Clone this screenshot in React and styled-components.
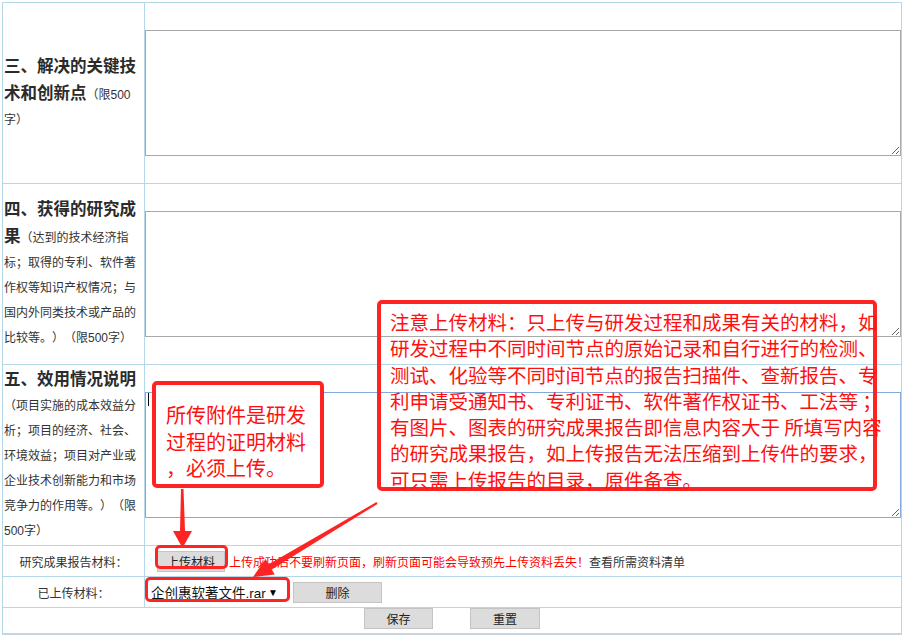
import React from "react"
import styled, { createGlobalStyle } from "styled-components"

const GlobalStyle = createGlobalStyle`
	html, body {
		margin: 0;
		padding: 0;
		background: #ffffff;
	}
	body {
		font-family: "Liberation Sans", "Noto Sans CJK SC", sans-serif;
		color: #333333;
		text-spacing-trim: space-all;
	}
`

const RED = "#ff2424"
const LINE = "#b5d8e8"

const Page = styled.div`
	position: relative;
	width: 904px;
	height: 638px;
	overflow: hidden;
	padding: 2px 0 0 2px;
	box-sizing: border-box;
`

const Form = styled.div`
	display: grid;
	grid-template-columns: 142px 757px;
	width: 900px;
	border-top: 1px solid ${LINE};
	border-left: 1px solid ${LINE};
	box-sizing: border-box;
`

const Cell = styled.div`
	position: relative;
	display: flex;
	align-items: center;
	box-sizing: border-box;
	height: ${(p) => p.$h}px;
	border-right: 1px solid ${LINE};
	border-bottom: 1px solid ${LINE};
`

const LabelCell = styled(Cell)`
	padding: 0 6px 0 1px;
`

const Label = styled.div`
	line-height: 25px;
	font-size: 12px;
	color: #333333;
	text-spacing-trim: space-all;
`

const Title = styled.span`
	font-size: 16.5px;
	font-weight: bold;
	color: #2b2b2b;
`

const FieldCell = styled(Cell)`
	padding-left: ${(p) => p.$pad || 0}px;
`

const SmallLabelCell = styled(Cell)`
	justify-content: center;
	font-size: 12px;
	color: #333333;
`

const ActionCell = styled(Cell)`
	grid-column: 1 / -1;
	align-items: flex-start;
	justify-content: center;
	gap: 37px;
	border-bottom: 2px solid #c6d5df;
`

const TextArea = styled.textarea`
	display: block;
	width: 100%;
	height: 126px;
	margin: 0;
	box-sizing: border-box;
	border: 1px solid ${(p) => (p.$active ? "#86a9dc" : "#a9a9a9")};
	outline: none;
	font-family: inherit;
	background: #ffffff;
`

const Caret = styled.span`
	position: absolute;
	left: 3px;
	top: 28px;
	width: 1px;
	height: 13px;
	background: #000000;
`

const Button = styled.button`
	width: ${(p) => p.$w}px;
	height: 21px;
	margin: 0;
	padding: 0;
	background: #dcdcdc;
	border: 1px solid #c4c4c4;
	border-radius: 0;
	font-family: "Noto Sans CJK SC", sans-serif;
	font-size: 12px;
	color: #222222;
`

const Notice = styled.span`
	margin-left: 4px;
	font-size: 12px;
	color: #ff0000;
	white-space: nowrap;
`

const NoticeLink = styled.span`
	color: #333333;
`

const Select = styled.div`
	display: flex;
	align-items: center;
	justify-content: space-between;
	width: 140px;
	height: 19px;
	padding: 0 9px 0 4px;
	box-sizing: border-box;
	background: #ffffff;
	font-size: 13.5px;
	color: #111111;
	margin-right: 6px;
`

const SelectArrow = styled.span`
	font-size: 10px;
	color: #000000;
`

const Overlay = styled.div`
	position: absolute;
	inset: 0;
	pointer-events: none;
`

const Callout = styled.div`
	position: absolute;
	left: ${(p) => p.$x}px;
	top: ${(p) => p.$y}px;
	width: ${(p) => p.$w}px;
	height: ${(p) => p.$h}px;
	box-sizing: border-box;
	border: ${(p) => p.$bw || 4}px solid ${RED};
	border-radius: 5px;
	background: ${(p) => (p.$fill ? "#ffffff" : "transparent")};
	padding: ${(p) => p.$pad || "0"};
	color: #ff1010;
	font-family: "Noto Sans CJK SC", sans-serif;
	font-size: ${(p) => p.$fs || 20}px;
	line-height: ${(p) => p.$lh || 26}px;
`

const CalloutLine = styled.div`
	white-space: nowrap;
`

const Arrows = styled.svg`
	position: absolute;
	left: 0;
	top: 0;
`

const bigNote = [
	"注意上传材料：只上传与研发过程和成果有关的材料，如",
	"研发过程中不同时间节点的原始记录和自行进行的检测、",
	"测试、化验等不同时间节点的报告扫描件、查新报告、专",
	"利申请受通知书、专利证书、软件著作权证书、工法等 ；",
	"有图片、图表的研究成果报告即信息内容大于 所填写内容",
	"的研究成果报告，如上传报告无法压缩到上传件的要求，",
	"可只需上传报告的目录，原件备查。",
]

const smallNote = ["所传附件是研发", "过程的证明材料", "，必须上传。"]

const App = () => {
	return (
		<Page>
			<GlobalStyle />
			<Form>
				<LabelCell $h={181}>
					<Label>
						<Title>三、解决的关键技术和创新点</Title>（限500字）
					</Label>
				</LabelCell>
				<FieldCell $h={181}>
					<TextArea />
				</FieldCell>

				<LabelCell $h={181}>
					<Label>
						<Title>四、获得的研究成果</Title>（达到的技术经济指标；取得的专利、软件著作权等知识产权情况；与国内外同类技术或产品的比较等。）（限500字）
					</Label>
				</LabelCell>
				<FieldCell $h={181}>
					<TextArea />
				</FieldCell>

				<LabelCell $h={181}>
					<Label>
						<Title>五、效用情况说明</Title>（项目实施的成本效益分析；项目的经济、社会、环境效益；项目对产业或企业技术创新能力和市场竞争力的作用等。）（限500字）
					</Label>
				</LabelCell>
				<FieldCell $h={181}>
					<TextArea $active />
					<Caret />
				</FieldCell>

				<SmallLabelCell $h={31}>研究成果报告材料：</SmallLabelCell>
				<FieldCell $h={31} $pad={12}>
					<Button $w={68}>上传材料</Button>
					<Notice>
						上传成功后不要刷新页面，刷新页面可能会导致预先上传资料丢失！<NoticeLink>查看所需资料清单</NoticeLink>
					</Notice>
				</FieldCell>

				<SmallLabelCell $h={31}>已上传材料：</SmallLabelCell>
				<FieldCell $h={31} $pad={2}>
					<Select>
						<span>企创惠软著文件.rar</span>
						<SelectArrow>▼</SelectArrow>
					</Select>
					<Button $w={89}>删除</Button>
				</FieldCell>

				<ActionCell $h={27}>
					<Button $w={69}>保存</Button>
					<Button $w={70}>重置</Button>
				</ActionCell>
			</Form>

			<Overlay>
				<Callout $x={152} $y={381} $w={172} $h={107} $fill $pad="17px 0 0 10px" $fs={20} $lh={26.5}>
					{smallNote.map((l) => (
						<CalloutLine key={l}>{l}</CalloutLine>
					))}
				</Callout>
				<Callout $x={377} $y={300} $w={500} $h={191} $pad="5px 0 0 9px" $fs={19.5} $lh={26.3}>
					{bigNote.map((l) => (
						<CalloutLine key={l}>{l}</CalloutLine>
					))}
				</Callout>
				<Callout $x={155} $y={545} $w={73} $h={24} $bw={3} />
				<Callout $x={145} $y={577} $w={145} $h={25} $bw={3} />
				<Arrows width="904" height="638" viewBox="0 0 904 638">
					<polygon
						fill={RED}
						points="181,489 183.5,489 185,531 192,531 182.5,548 173,531 180,531"
					/>
					<polygon
						fill={RED}
						points="377.5,503.9 271.7,569.4 274.8,574.5 253,577 265.6,559.1 268.7,564.2 376.5,502.1"
					/>
				</Arrows>
			</Overlay>
		</Page>
	)
}

export default App
